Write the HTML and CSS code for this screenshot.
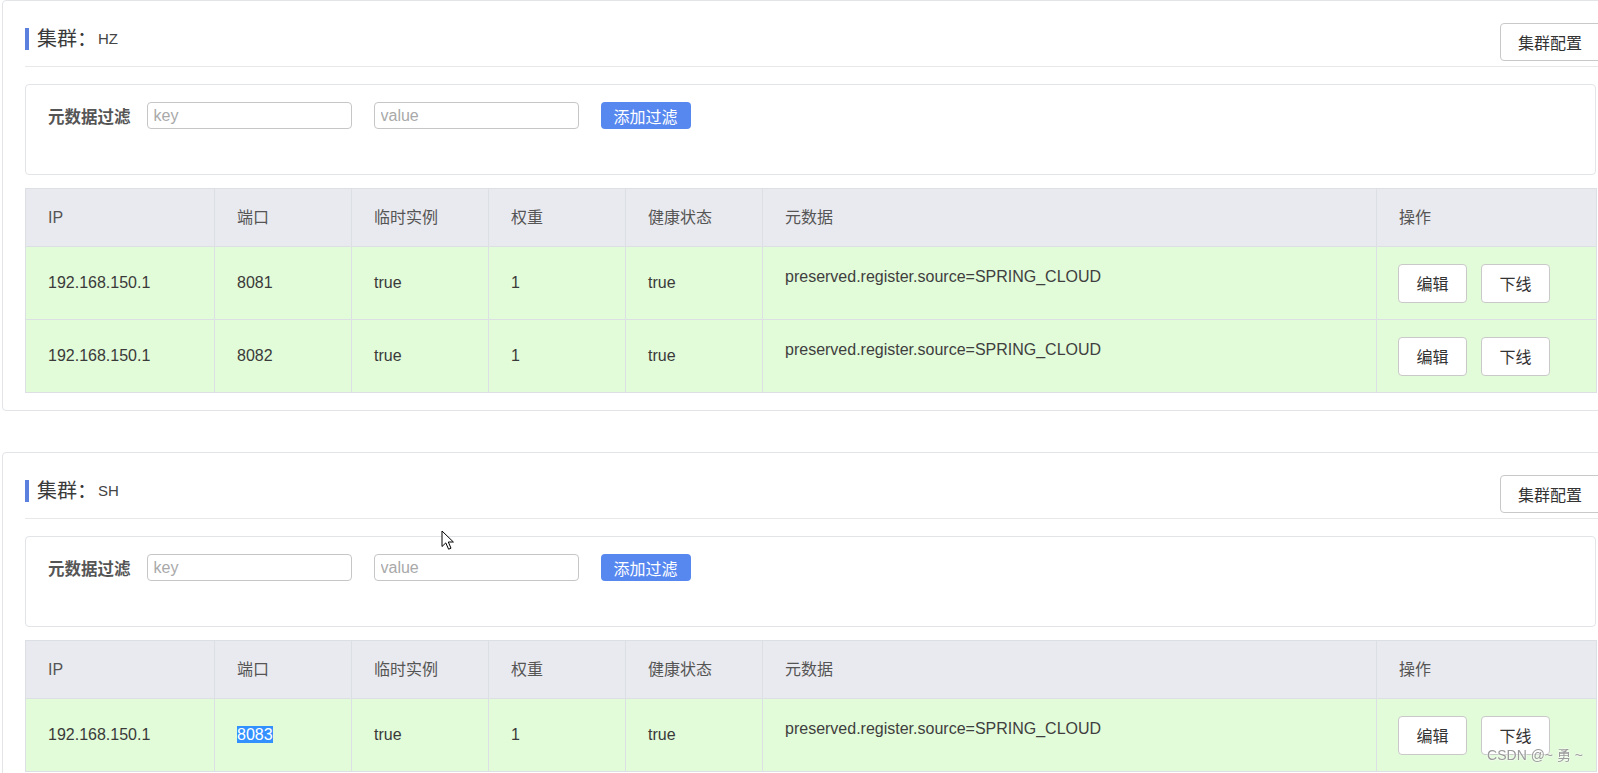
FILE: index.html
```html
<!DOCTYPE html>
<html lang="zh-CN">
<head>
<meta charset="utf-8">
<title>集群</title>
<link rel="stylesheet" href="styles.css">
</head>
<body>
<div class="page">

  <section class="card">
    <div class="card-head">
      <h2 class="title">集群：<span class="title-name">HZ</span></h2>
      <button class="btn btn-config">集群配置</button>
    </div>
    <div class="filter">
      <span class="filter-label">元数据过滤</span>
      <input class="filter-input" placeholder="key">
      <input class="filter-input" placeholder="value">
      <button class="btn-primary">添加过滤</button>
    </div>
    <table class="grid">
      <colgroup>
        <col class="c-ip"><col class="c-sm"><col class="c-sm"><col class="c-sm"><col class="c-sm"><col class="c-meta"><col class="c-op">
      </colgroup>
      <thead>
        <tr><th>IP</th><th>端口</th><th>临时实例</th><th>权重</th><th>健康状态</th><th>元数据</th><th>操作</th></tr>
      </thead>
      <tbody>
        <tr>
          <td>192.168.150.1</td><td>8081</td><td>true</td><td>1</td><td>true</td>
          <td class="meta">preserved.register.source=SPRING_CLOUD</td>
          <td class="ops"><button class="btn btn-sm">编辑</button><button class="btn btn-sm">下线</button></td>
        </tr>
        <tr>
          <td>192.168.150.1</td><td>8082</td><td>true</td><td>1</td><td>true</td>
          <td class="meta">preserved.register.source=SPRING_CLOUD</td>
          <td class="ops"><button class="btn btn-sm">编辑</button><button class="btn btn-sm">下线</button></td>
        </tr>
      </tbody>
    </table>
  </section>

  <section class="card">
    <div class="card-head">
      <h2 class="title">集群：<span class="title-name">SH</span></h2>
      <button class="btn btn-config">集群配置</button>
    </div>
    <div class="filter">
      <span class="filter-label">元数据过滤</span>
      <input class="filter-input" placeholder="key">
      <input class="filter-input" placeholder="value">
      <button class="btn-primary">添加过滤</button>
    </div>
    <table class="grid">
      <colgroup>
        <col class="c-ip"><col class="c-sm"><col class="c-sm"><col class="c-sm"><col class="c-sm"><col class="c-meta"><col class="c-op">
      </colgroup>
      <thead>
        <tr><th>IP</th><th>端口</th><th>临时实例</th><th>权重</th><th>健康状态</th><th>元数据</th><th>操作</th></tr>
      </thead>
      <tbody>
        <tr>
          <td>192.168.150.1</td><td><span class="selected">8083</span></td><td>true</td><td>1</td><td>true</td>
          <td class="meta">preserved.register.source=SPRING_CLOUD</td>
          <td class="ops"><button class="btn btn-sm">编辑</button><button class="btn btn-sm">下线</button></td>
        </tr>
      </tbody>
    </table>
  </section>

</div>

<svg class="cursor" width="14" height="21" viewBox="0 0 14 21" aria-hidden="true">
  <path d="M1 1 L1 16.5 L4.8 12.9 L7.6 19.2 L10 18.2 L7.3 12 L12.4 12 Z" fill="#fff" stroke="#000" stroke-width="1" stroke-linejoin="miter"/>
</svg>

<div class="watermark">CSDN @~ 勇 ~</div>
</body>
</html>
```

FILE: styles.css
```css
html, body {
  overflow: hidden;
}

body {
  margin: 0;
  background: #fff;
  font-family: "Liberation Sans", "Noto Sans CJK SC", sans-serif;
  font-size: 16px;
  color: #333;
}

.page {
  padding: 0 0 0 2px;
}

.card {
  box-sizing: border-box;
  width: 1617px;
  border: 1px solid #e2e4e8;
  border-radius: 4px;
  padding: 0 22px 17px 22px;
  margin-bottom: 41px;
}

.card-head {
  display: flex;
  justify-content: space-between;
  align-items: flex-start;
  padding: 22px 0 5px 0;
  margin-right: -6px;
  border-bottom: 1px solid #e8e8e8;
}

.title {
  margin: 5px 0 0 0;
  height: 22px;
  line-height: 22px;
  border-left: 4px solid #5b80de;
  padding-left: 8px;
  font-size: 20px;
  font-weight: normal;
  color: #3a3a3a;
  display: flex;
  align-items: center;
}

.title-name {
  font-size: 15px;
  color: #444;
  margin-left: 1px;
}

.btn {
  font-family: inherit;
  background: #fff;
  border: 1px solid #c9c9c9;
  border-radius: 4px;
  color: #333;
  cursor: pointer;
}

.btn-config {
  height: 38px;
  padding: 0 19px 0 17px;
  font-size: 16px;
}

.filter {
  margin-top: 17px;
  border: 1px solid #e2e4e8;
  border-radius: 4px;
  padding: 17px 22px 45px 22px;
  display: flex;
  align-items: center;
  height: 27px;
}

.filter-label {
  font-weight: bold;
  font-size: 16.5px;
  color: #555;
  margin-right: 16px;
}

.filter-input {
  box-sizing: border-box;
  width: 205px;
  height: 27px;
  border: 1px solid #c6c6c6;
  border-radius: 4px;
  padding: 0 6px;
  font-family: inherit;
  font-size: 16px;
  color: #333;
  margin-right: 22px;
  outline: none;
}

.filter-input::placeholder {
  color: #a9a9a9;
}

.btn-primary {
  height: 27px;
  width: 90px;
  padding: 0;
  border: none;
  border-radius: 4px;
  background: #5788f0;
  color: #fff;
  font-family: inherit;
  font-size: 16px;
}

.grid {
  margin-top: 13px;
  width: 1571px;
  table-layout: fixed;
  border-collapse: collapse;
  border: 1px solid #dcdfe4;
}

.c-ip { width: 189px; }
.c-sm { width: 137px; }
.c-meta { width: 614px; }
.c-op { width: 220px; }

.grid thead tr {
  height: 58px;
}

.grid tbody tr {
  height: 73px;
}

.grid th,
.grid td {
  border: 1px solid #dcdfe4;
  padding: 0 0 0 22px;
  text-align: left;
  line-height: 22px;
}

.grid th {
  background: #e9eaef;
  font-weight: normal;
  color: #555;
}

.grid td {
  background: #e2fbd9;
  color: #3a3a3a;
}

.grid td.meta {
  vertical-align: top;
  padding-top: 19px;
  color: #3f3f3f;
}

.grid td.ops {
  padding-left: 21px;
}

.btn-sm {
  height: 39px;
  padding: 0 17.5px;
  font-size: 16px;
  margin-right: 14px;
}

.selected {
  background: #3390ff;
  color: #fff;
}

.cursor {
  position: absolute;
  left: 441px;
  top: 530px;
}

.watermark {
  position: fixed;
  right: 15px;
  bottom: 9px;
  font-size: 14px;
  color: #9a9a9a;
  text-shadow: 0 0 2px #fff, 0 0 2px #fff;
}
```
